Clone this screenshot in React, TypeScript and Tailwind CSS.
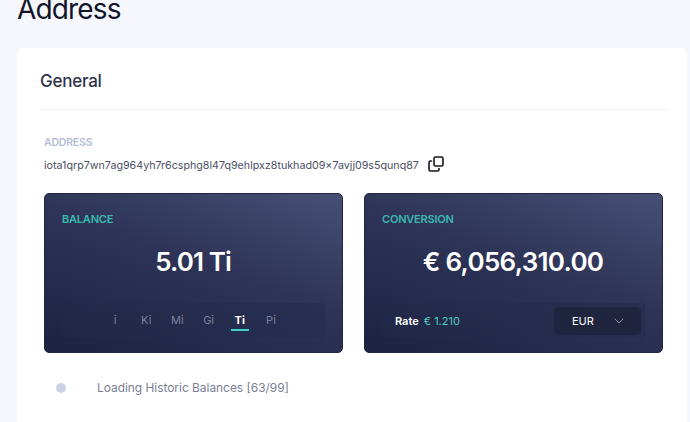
import React from 'react';
import { ChevronDown } from 'lucide-react';

const units = ['i', 'Ki', 'Mi', 'Gi', 'Ti', 'Pi'];

const CopyIcon = () => (
  <svg width="16" height="16" viewBox="0 0 16 16" fill="none" stroke="#14161f" strokeWidth="1.6" strokeLinejoin="round" strokeLinecap="round">
    <rect x="6" y="1" width="9" height="9" rx="1.6" />
    <path d="M3.5 5H2.6A1.6 1.6 0 0 0 1 6.6v6.8A1.6 1.6 0 0 0 2.6 15h6.8a1.6 1.6 0 0 0 1.6-1.6v-.9" />
  </svg>
);

const Panel: React.FC<{ children: React.ReactNode }> = ({ children }) => (
  <div className="w-[299px] h-[160px] rounded-[5px] border border-[#1f2440] bg-[linear-gradient(20deg,#1c2241_0%,#2d3457_55%,#474f75_100%)] flex flex-col pl-[18px] pr-[17px] pt-[19px]">
    {children}
  </div>
);

const App: React.FC = () => {
  return (
    <div className="font-['Inter',sans-serif] w-[690px] h-[422px] overflow-hidden bg-[#f6f7fc] pl-[17px] pr-[3px]">
      <h1 className="h-[48px] -mt-[4px] text-[28px] leading-[26px] tracking-[-0.85px] font-normal text-[#12152a]">Address</h1>

      <div className="mt-[4px] h-[400px] rounded-t-[6px] bg-white pl-[23px] pr-[20px]">
        <div className="h-[62px] pt-[23px] border-b border-[#f0f1f6]">
          <h2 className="text-[17px] leading-[20px] tracking-[-0.25px] font-medium text-[#2f3349]">General</h2>
        </div>

        <div className="pl-[4px] pt-[27px]">
          <div className="text-[10.5px] leading-[12px] font-semibold tracking-[-0.2px] text-[#b5bcd8]">ADDRESS</div>
          <div className="mt-[10px] flex items-center">
            <span className="text-[10.69px] leading-[14px] text-[#4a4f63]">iota1qrp7wn7ag964yh7r6csphg8l47q9ehlpxz8tukhad09×7avjj09s5qunq87</span>
            <span className="ml-[9px] -mt-[5px]"><CopyIcon /></span>
          </div>

          <div className="mt-[20px] flex gap-[21px]">
            <Panel>
              <div className="-ml-[1px] text-[11px] leading-[12px] font-semibold tracking-[-0.2px] text-[#3bb8ae]">BALANCE</div>
              <div className="mt-[22px] pr-[2px] text-center text-[26px] leading-[30px] font-semibold tracking-[-0.9px] text-white">5.01 Ti</div>
              <div className="mt-[26px] h-[35px] rounded-[4px] bg-[#23294a]/50 flex justify-center items-center pb-[2px] pr-[2px]">
                {units.map((u) => (
                  <div key={u} className="relative w-[31.2px] text-center text-[11px] leading-[12px] text-[#7b8199]">
                    <span className={u === 'Ti' ? 'font-bold text-white' : ''}>{u}</span>
                    {u === 'Ti' && <span className="absolute left-[6.5px] right-[6.5px] top-[15px] h-[2px] bg-[#3fd0c5]" />}
                  </div>
                ))}
              </div>
            </Panel>
            <Panel>
              <div className="-ml-[1px] text-[11px] leading-[12px] font-semibold tracking-[-0.2px] text-[#3bb8ae]">CONVERSION</div>
              <div className="mt-[22px] pr-[2px] text-center text-[26px] leading-[30px] font-semibold tracking-[-0.7px] text-white">€ 6,056,310.00</div>
              <div className="mt-[26px] h-[35px] rounded-[4px] bg-[#23294a]/50 flex items-center justify-between pl-[12px] pr-[4px]">
                <div className="flex items-center gap-[5px] text-[11px] leading-[12px]">
                  <span className="font-semibold text-white">Rate</span>
                  <span className="text-[#4ecdc4]">€ 1.210</span>
                </div>
                <div className="w-[87px] h-[28px] rounded-[5px] bg-[#20253f] flex items-center justify-between pl-[18px] pr-[14px]">
                  <span className="text-[11px] leading-[12px] text-white">EUR</span>
                  <ChevronDown size={16} strokeWidth={1.3} className="text-[#9aa0b6]" />
                </div>
              </div>
            </Panel>
          </div>

          <div className="mt-[27px] flex items-center pl-[12px]">
            <span className="w-[10px] h-[10px] rounded-full bg-[#ccd2e6]" />
            <span className="ml-[31px] text-[11.9px] leading-[16px] text-[#7a7f95]">Loading Historic Balances [63/99]</span>
          </div>
        </div>
      </div>
    </div>
  );
};

export default App;
